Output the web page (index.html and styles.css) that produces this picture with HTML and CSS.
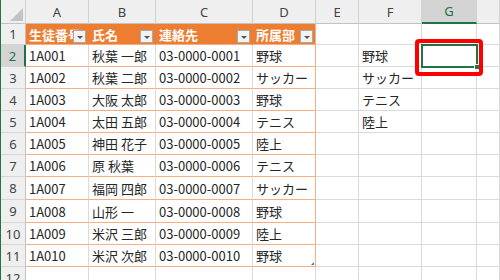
FILE: index.html
```html
<!DOCTYPE html>
<html lang="ja">
<head>
<meta charset="utf-8">
<title>Sheet</title>
<link rel="stylesheet" href="styles.css">
</head>
<body>
<div class="sheet">
  <div class="row colhead">
    <div class="corner"><svg width="24" height="23" viewBox="0 0 24 23"><polygon points="22,8 22,21 9,21" fill="#c3c3c3"/></svg></div>
    <div>A</div><div>B</div><div>C</div><div>D</div><div>E</div><div>F</div><div class="hsel">G</div><div></div>
  </div>
  <div class="row r1">
    <div class="rh">1</div>
    <div class="th">生徒番号<span class="fb"></span></div>
    <div class="th">氏名<span class="fb"></span></div>
    <div class="th">連絡先<span class="fb"></span></div>
    <div class="th last">所属部<span class="fb"></span></div>
    <div></div><div></div><div></div><div></div>
  </div>
  <div class="row">
    <div class="rh rsel">2</div>
    <div class="t">1A001</div><div class="t">秋葉 一郎</div><div class="t">03-0000-0001</div><div class="t last">野球</div>
    <div></div><div>野球</div><div class="active"><span class="selbox"><span class="handle"></span></span></div><div></div>
  </div>
  <div class="row">
    <div class="rh">3</div>
    <div class="t">1A002</div><div class="t">秋葉 二郎</div><div class="t">03-0000-0002</div><div class="t last">サッカー</div>
    <div></div><div>サッカー</div><div></div><div></div>
  </div>
  <div class="row">
    <div class="rh">4</div>
    <div class="t">1A003</div><div class="t">大阪 太郎</div><div class="t">03-0000-0003</div><div class="t last">野球</div>
    <div></div><div>テニス</div><div></div><div></div>
  </div>
  <div class="row">
    <div class="rh">5</div>
    <div class="t">1A004</div><div class="t">太田 五郎</div><div class="t">03-0000-0004</div><div class="t last">テニス</div>
    <div></div><div>陸上</div><div></div><div></div>
  </div>
  <div class="row">
    <div class="rh">6</div>
    <div class="t">1A005</div><div class="t">神田 花子</div><div class="t">03-0000-0005</div><div class="t last">陸上</div>
    <div></div><div></div><div></div><div></div>
  </div>
  <div class="row">
    <div class="rh">7</div>
    <div class="t">1A006</div><div class="t">原 秋葉</div><div class="t">03-0000-0006</div><div class="t last">テニス</div>
    <div></div><div></div><div></div><div></div>
  </div>
  <div class="row tall">
    <div class="rh">8</div>
    <div class="t">1A007</div><div class="t">福岡 四郎</div><div class="t">03-0000-0007</div><div class="t last">サッカー</div>
    <div></div><div></div><div></div><div></div>
  </div>
  <div class="row tall">
    <div class="rh">9</div>
    <div class="t">1A008</div><div class="t">山形 一</div><div class="t">03-0000-0008</div><div class="t last">野球</div>
    <div></div><div></div><div></div><div></div>
  </div>
  <div class="row">
    <div class="rh">10</div>
    <div class="t">1A009</div><div class="t">米沢 三郎</div><div class="t">03-0000-0009</div><div class="t last">陸上</div>
    <div></div><div></div><div></div><div></div>
  </div>
  <div class="row">
    <div class="rh">11</div>
    <div class="t">1A010</div><div class="t">米沢 次郎</div><div class="t">03-0000-0010</div><div class="t last">野球<span class="resize"></span></div>
    <div></div><div></div><div></div><div></div>
  </div>
  <div class="row">
    <div class="rh">12</div>
    <div></div><div></div><div></div><div></div><div></div><div></div><div></div><div></div>
  </div>
</div>
<div class="callout"></div>
</body>
</html>
```
FILE: styles.css
```css
* { box-sizing: border-box; margin: 0; padding: 0; }
html, body { width: 500px; height: 280px; overflow: hidden; background: #ffffff; }
body {
  position: relative;
  font-family: "Noto Sans CJK JP", "Noto Sans", sans-serif;
  font-size: 13px;
  color: #262626;
}
.sheet { border-left: 1px solid #217346; height: 280px; }
.row {
  display: grid;
  grid-template-columns: 25px 63px 67px 97px 63px 43px 63px 55px 1fr;
  height: 22px;
}
.row.r1 { height: 21px; }
.row.tall { height: 23px; }
.row > div {
  position: relative;
  display: flex;
  align-items: center;
  padding-left: 3px;
  white-space: nowrap;
  overflow: hidden;
  border-right: 1px solid #dadada;
  border-bottom: 1px solid #dadada;
}
.colhead { height: 24px; }
.colhead > div {
  justify-content: center;
  padding-left: 0;
  background: #efefef;
  color: #444444;
  font-family: "Noto Sans", sans-serif;
  font-size: 13px;
  border-right-color: #d2d2d2;
  border-bottom-color: #c2c2c2;
}
.colhead > div.corner { padding: 0; align-items: flex-start; justify-content: flex-start; }
.colhead > div.hsel {
  background: #d4d4d4;
  color: #217346;
  border-bottom: 2px solid #217346;
}
.row > div.rh {
  justify-content: center;
  padding-left: 0;
  background: #efefef;
  color: #444444;
  font-family: "Noto Sans", sans-serif;
  border-right-color: #c2c2c2;
  border-bottom-color: #d6d6d6;
}
.row > div.rh.rsel {
  background: #d4d4d4;
  color: #217346;
  border-right: 2px solid #217346;
}
.row > div.th {
  background: #ed7d31;
  color: #ffffff;
  font-weight: bold;
  border-right-color: #ed7d31;
  border-bottom-color: #f4b084;
}
.row > div.t { border-bottom-color: #f4b084; }
.row > div.last { border-right-color: #f4b084; }
.fb {
  position: absolute;
  right: 2px;
  bottom: 1px;
  width: 13px;
  height: 13px;
  background: #f2f2f2;
  border: 1px solid #a9a9a9;
}
.fb::after {
  content: "";
  position: absolute;
  left: 3px;
  top: 5px;
  border-left: 3px solid transparent;
  border-right: 3px solid transparent;
  border-top: 3px solid #555555;
}
.row > div.active { overflow: visible; z-index: 2; }
.selbox {
  position: absolute;
  left: -1px;
  top: -1px;
  right: -2px;
  bottom: -2px;
  border: 2px solid #217346;
}
.handle {
  position: absolute;
  right: -4px;
  bottom: -4px;
  width: 6px;
  height: 6px;
  background: #217346;
  border: 1px solid #ffffff;
}
.resize {
  position: absolute;
  right: 1px;
  bottom: 1px;
  width: 0;
  height: 0;
  border-left: 3px solid transparent;
  border-bottom: 3px solid #4472c4;
}
.callout {
  position: absolute;
  left: 415px;
  top: 39px;
  width: 68px;
  height: 37px;
  border: 4px solid #ff0000;
  border-radius: 4px;
  z-index: 5;
}
```
